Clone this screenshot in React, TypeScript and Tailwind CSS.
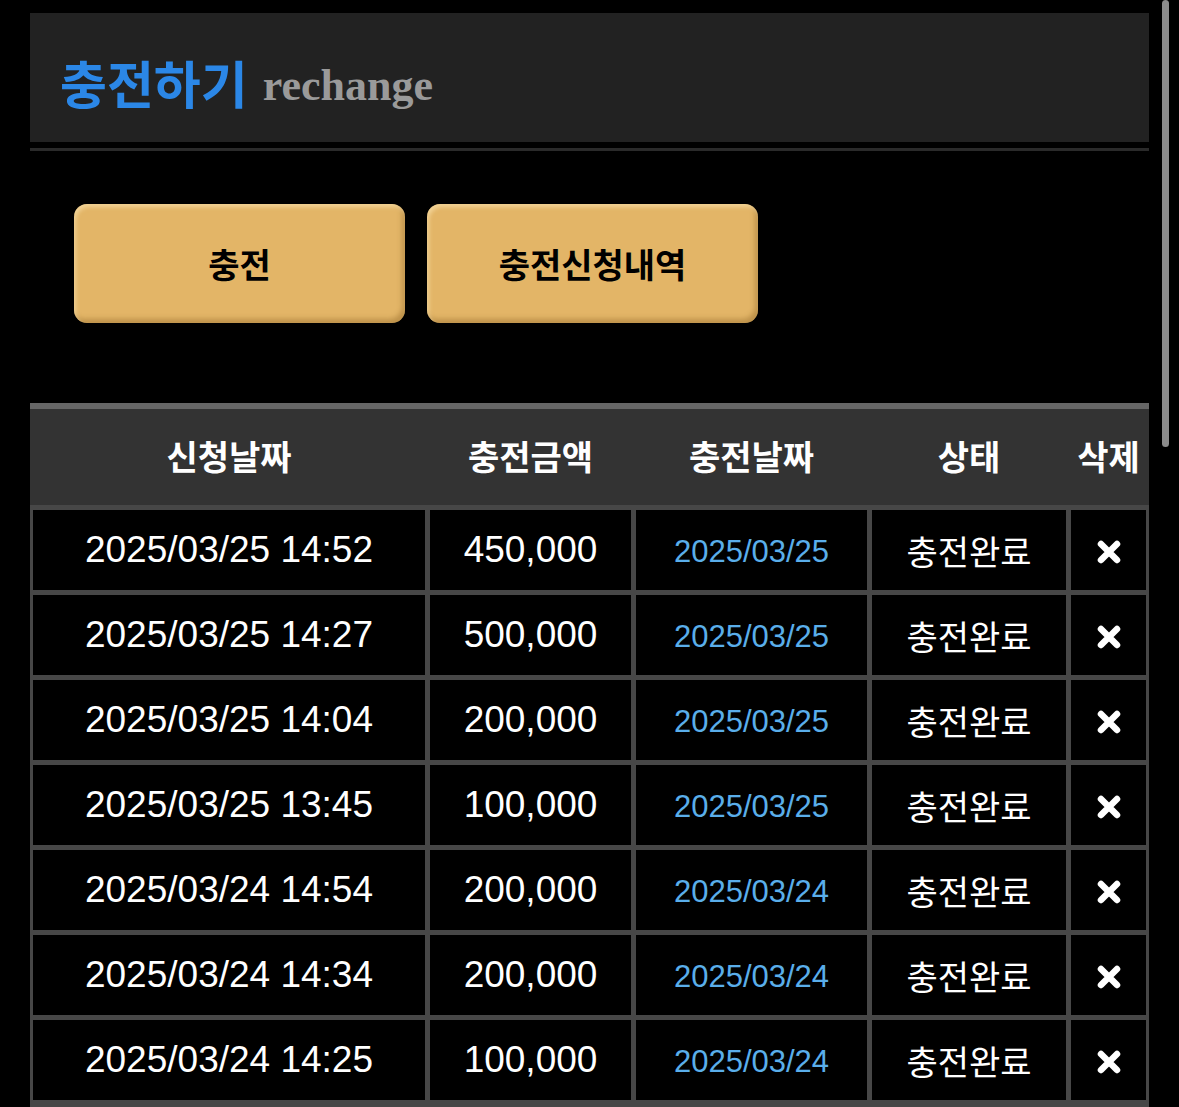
import { useState } from 'react';

type Charge = {
  requestedAt: string;
  amount: string;
  chargedOn: string;
  status: string;
};

const charges: Charge[] = [
  { requestedAt: '2025/03/25 14:52', amount: '450,000', chargedOn: '2025/03/25', status: '충전완료' },
  { requestedAt: '2025/03/25 14:27', amount: '500,000', chargedOn: '2025/03/25', status: '충전완료' },
  { requestedAt: '2025/03/25 14:04', amount: '200,000', chargedOn: '2025/03/25', status: '충전완료' },
  { requestedAt: '2025/03/25 13:45', amount: '100,000', chargedOn: '2025/03/25', status: '충전완료' },
  { requestedAt: '2025/03/24 14:54', amount: '200,000', chargedOn: '2025/03/24', status: '충전완료' },
  { requestedAt: '2025/03/24 14:34', amount: '200,000', chargedOn: '2025/03/24', status: '충전완료' },
  { requestedAt: '2025/03/24 14:25', amount: '100,000', chargedOn: '2025/03/24', status: '충전완료' },
];

const cols = 'grid grid-cols-[392px_201px_231px_194px_75px] gap-x-[5px] px-[3px]';
const kr = "font-['Noto_Sans_CJK_KR',sans-serif]";
const latin = "font-['Liberation_Sans','Noto_Sans_CJK_KR',sans-serif]";

function DeleteIcon() {
  return (
    <svg width="26" height="26" viewBox="0 0 26 26" aria-hidden="true">
      <path
        d="M5 5 L21 21 M21 5 L5 21"
        stroke="#fff"
        strokeWidth="6.5"
        strokeLinecap="round"
      />
    </svg>
  );
}

function ActionButton({ label, onClick }: { label: string; onClick?: () => void }) {
  return (
    <button
      onClick={onClick}
      className={`${kr} flex h-[119px] w-[331px] items-center justify-center rounded-[13px] bg-[#e3b567] text-[34px] font-bold text-black shadow-[inset_2px_3px_4px_rgba(255,236,190,0.55),inset_-3px_-4px_5px_rgba(120,80,20,0.35)]`}
    >
      {label}
    </button>
  );
}

export default function App() {
  const [rows, setRows] = useState(charges);

  return (
    <div className="relative h-[1107px] overflow-hidden bg-black px-[30px] pt-[13px]">
      {/* page title */}
      <div className="flex h-[129px] items-end bg-[#222222] pb-[34px] pl-[30px]">
        <h1 className={`${kr} text-[51px] font-bold leading-none text-[#2b87e7]`}>충전하기</h1>
        <span className="ml-[15px] font-['Liberation_Serif',serif] text-[44px] font-bold leading-none text-[#9a9a9a]">
          rechange
        </span>
      </div>
      <div className="mt-[6px] h-[3px] bg-[#2a2a2a]" />

      {/* tabs */}
      <div className="mt-[53px] flex gap-[22px] pl-[44px]">
        <ActionButton label="충전" />
        <ActionButton label="충전신청내역" />
      </div>

      {/* history table */}
      <div className="mt-[80px]">
        <div className={`${cols} ${kr} h-[102px] items-center border-t-[6px] border-[#666666] bg-[#333333] pb-[4px] text-[34px] font-bold text-white`}>
          <div className="text-center">신청날짜</div>
          <div className="text-center">충전금액</div>
          <div className="text-center">충전날짜</div>
          <div className="text-center">상태</div>
          <div className="text-center">삭제</div>
        </div>
        <div className={`${cols} gap-y-[5px] bg-[#474747] pb-[10px] pt-[5px]`}>
          {rows.map((r, i) => (
            <div key={i} className="contents">
              <div className={`${latin} flex h-[80px] items-center justify-center bg-black text-[37px] text-white`}>
                {r.requestedAt}
              </div>
              <div className={`${latin} flex h-[80px] items-center justify-center bg-black text-[37px] text-white`}>
                {r.amount}
              </div>
              <div className={`${latin} flex h-[80px] items-center justify-center bg-black pt-[4px] text-[31px] text-[#5aaeea]`}>
                {r.chargedOn}
              </div>
              <div className={`${kr} flex h-[80px] items-center justify-center bg-black text-[34px] text-white`}>
                {r.status}
              </div>
              <button
                onClick={() => setRows(rows.filter((_, j) => j !== i))}
                className="flex h-[80px] items-center justify-center bg-black pt-[4px]"
              >
                <DeleteIcon />
              </button>
            </div>
          ))}
        </div>
      </div>

      {/* overlay scrollbar */}
      <div className="absolute right-[10px] top-0 h-[447px] w-[7px] rounded-full bg-[#8c8c8c]" />
    </div>
  );
}
